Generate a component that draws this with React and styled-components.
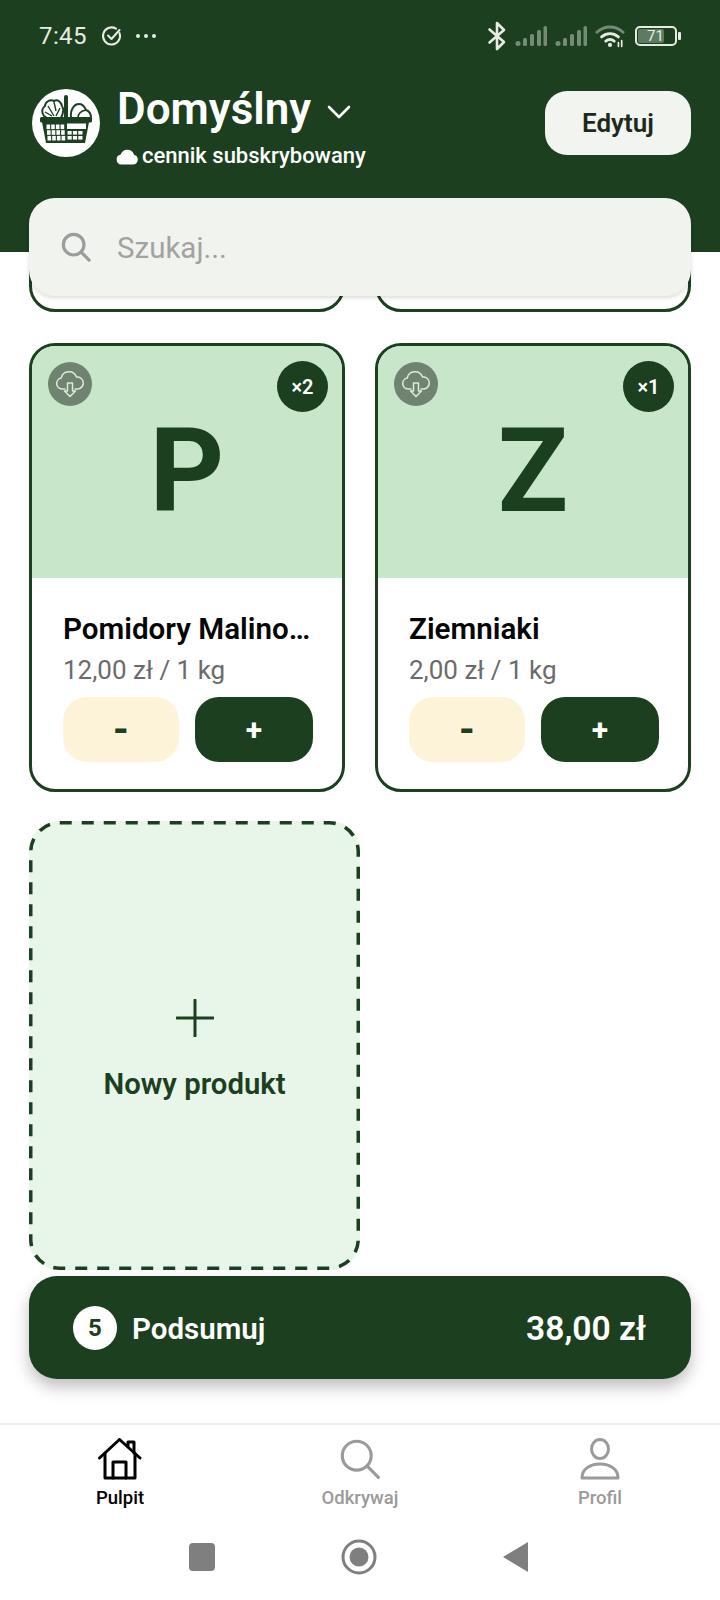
import React from 'react';
import styled, { createGlobalStyle } from 'styled-components';

const DARK = '#1c3f20';

const Global = createGlobalStyle`
    html, body {
        margin: 0;
        padding: 0;
        background: #fff;
        font-family: Roboto, "Noto Sans", sans-serif;
    }
`;

const Page = styled.div`
    position: relative;
    width: 720px;
    height: 1600px;
    display: flex;
    flex-direction: column;
    background: #fff;
    overflow: hidden;
`;

const Top = styled.header`
    height: 252px;
    flex: none;
    background: ${DARK};
    color: #fff;
    box-sizing: border-box;
    padding: 18px 29px 0 32px;
`;

const StatusBar = styled.div`
    height: 36px;
    display: flex;
    align-items: center;
    justify-content: space-between;
    padding: 0 14px 0 7px;
    color: #e6ebe4;
`;

const StatusGroup = styled.div`
    display: flex;
    align-items: center;
    gap: ${p => p.$gap || 10}px;
`;

const Time = styled.span`
    font-size: 24px;
    letter-spacing: 0.4px;
`;

const Profile = styled.div`
    margin-top: 35px;
    display: flex;
    align-items: flex-start;
    justify-content: space-between;
`;

const ProfileLeft = styled.div`
    display: flex;
    gap: 17px;
`;

const ProfileText = styled.div`
    display: flex;
    flex-direction: column;
    margin-top: -3px;
`;

const TitleRow = styled.div`
    display: flex;
    align-items: center;
    gap: 16px;
    height: 46px;
`;

const Title = styled.h1`
    margin: 0;
    font-size: 44px;
    line-height: 46px;
    font-weight: 600;
    color: #fff;
`;

const Sub = styled.div`
    margin-top: 11px;
    margin-left: -1px;
    display: flex;
    align-items: center;
    gap: 3px;
    font-size: 22px;
    line-height: 26px;
    font-weight: 500;
    color: #fff;
`;

const EditButton = styled.button`
    width: 146px;
    height: 64px;
    margin-top: 2px;
    border: 0;
    border-radius: 22px;
    background: #f2f4ef;
    color: #1b2a1d;
    font: 600 26px Roboto, sans-serif;
`;

const Search = styled.div`
    position: absolute;
    z-index: 3;
    left: 29px;
    top: 198px;
    width: 662px;
    height: 98px;
    box-sizing: border-box;
    padding-left: 32px;
    display: flex;
    align-items: center;
    gap: 26px;
    background: #f1f3ee;
    border-radius: 26px;
    box-shadow: 0 2px 4px rgba(0, 0, 0, 0.14);
`;

const SearchText = styled.span`
    font-size: 29.5px;
    margin-top: 2px;
    color: #a2a3a1;
`;

const Scroll = styled.main`
    position: relative;
    flex: 1;
    overflow: hidden;
`;

const Grid = styled.div`
    margin: -20px 0 0 29px;
    display: grid;
    grid-template-columns: 316px 316px;
    column-gap: 30px;
    row-gap: 31px;
    align-items: start;
`;

const PartialCard = styled.div`
    height: 80px;
    box-sizing: border-box;
    background: #fff;
    border: 3px solid ${DARK};
    border-radius: 26px;
`;

const Card = styled.article`
    height: 449px;
    box-sizing: border-box;
    background: #fff;
    border: 3px solid ${DARK};
    border-radius: 26px;
    overflow: hidden;
`;

const Thumb = styled.div`
    position: relative;
    height: 232px;
    box-sizing: border-box;
    padding-top: 17px;
    background: #c8e6c9;
    display: flex;
    align-items: center;
    justify-content: center;
    font-size: 116px;
    font-weight: 700;
    line-height: 1;
    color: ${DARK};
`;

const CloudBadge = styled.div`
    position: absolute;
    left: 16px;
    top: 16px;
    width: 44px;
    height: 44px;
    border-radius: 50%;
    background: #6e8471;
    display: flex;
    align-items: center;
    justify-content: center;
`;

const QtyBadge = styled.div`
    position: absolute;
    right: 14px;
    top: 15px;
    width: 51px;
    height: 51px;
    border-radius: 50%;
    background: ${DARK};
    color: #fff;
    font-size: 20px;
    font-weight: 600;
    display: flex;
    align-items: center;
    justify-content: center;
`;

const CardBody = styled.div`
    padding: 33px 28px 0 31px;
`;

const Name = styled.div`
    font-size: 29.6px;
    line-height: 36px;
    font-weight: 600;
    color: #050505;
    white-space: nowrap;
`;

const Price = styled.div`
    margin-top: 7px;
    font-size: 26px;
    line-height: 32px;
    color: #6b6b6b;
`;

const Steppers = styled.div`
    margin-top: 11px;
    display: grid;
    grid-template-columns: 116px 118px;
    gap: 16px;
`;

const Stepper = styled.button`
    height: 65px;
    border: 0;
    padding: 0;
    border-radius: 24px;
    background: ${p => (p.$primary ? DARK : '#fdf3d8')};
    color: ${p => (p.$primary ? '#fff' : DARK)};
    font: 700 ${p => (p.$primary ? 30 : 40)}px Roboto, sans-serif;
`;

const NewCard = styled.div`
    position: relative;
    width: 331px;
    height: 449px;
    margin-top: -2px;
    padding-top: 8px;
    box-sizing: border-box;
    background: #e8f5e9;
    border-radius: 30px;
    display: flex;
    flex-direction: column;
    align-items: center;
    justify-content: center;
    gap: 30px;
    font-size: 29.3px;
    font-weight: 600;
    color: ${DARK};
`;

const DashOutline = styled.svg`
    position: absolute;
    inset: 0;
`;

const Summary = styled.div`
    position: absolute;
    left: 29px;
    right: 29px;
    bottom: 44px;
    height: 103px;
    box-sizing: border-box;
    padding: 0 45px 0 44px;
    border-radius: 28px;
    background: ${DARK};
    color: #fff;
    display: flex;
    align-items: center;
    justify-content: space-between;
    box-shadow: 0 8px 16px rgba(0, 0, 0, 0.26);
`;

const SummaryLeft = styled.div`
    display: flex;
    align-items: center;
    gap: 15px;
`;

const SummaryLabel = styled.span`
    margin-top: 2px;
    font-size: 29.5px;
    font-weight: 600;
`;

const Count = styled.span`
    width: 44px;
    height: 44px;
    border-radius: 50%;
    background: #fff;
    color: ${DARK};
    font-size: 24px;
    font-weight: 700;
    display: flex;
    align-items: center;
    justify-content: center;
`;

const Total = styled.span`
    margin-top: 2px;
    font-size: 33.6px;
    font-weight: 600;
`;

const Nav = styled.nav`
    flex: none;
    height: 177px;
    box-sizing: border-box;
    border-top: 2px solid #eeeeee;
    display: flex;
    flex-direction: column;
`;

const Tabs = styled.div`
    display: grid;
    grid-template-columns: repeat(3, 240px);
    padding-top: 13px;
`;

const Tab = styled.div`
    display: flex;
    flex-direction: column;
    align-items: center;
    gap: 6px;
    font-size: 18.5px;
    line-height: 24px;
    font-weight: 500;
    color: ${p => (p.$active ? '#000' : '#9a9a9a')};
`;

const SystemBar = styled.div`
    margin-top: 29px;
    display: flex;
    justify-content: center;
    align-items: center;
    gap: 126px;
    padding-right: 3px;
`;

const Logo = () => (
    <svg width="68" height="68" viewBox="0 0 68 68" style={{ flex: 'none' }}>
        <circle cx="34" cy="34" r="34" fill="#fff" />
        <path d="M12 27c-3-4-2-8 1-10 0-4 5-7 9-5 4-2 7 1 8 5 2 3 1 8-1 12H15z" fill="#fff" stroke={DARK} strokeWidth="2" strokeLinejoin="round" />
        <path d="M16 17l6 10M22 13l2 9M28 19l-4 8M13 23l7 4" stroke={DARK} strokeWidth="1.4" fill="none" />
        <rect x="32" y="6" width="4" height="26" rx="2" fill={DARK} />
        <path d="M39 29c-1-8 3-14 8-14s6 4 7 6c3 1 5 4 5 8z" fill="#fff" stroke={DARK} strokeWidth="2" strokeLinejoin="round" />
        <path d="M46 29c0-4 2-7 8-8" stroke={DARK} strokeWidth="1.6" fill="none" />
        <rect x="8" y="28" width="52" height="5.5" rx="1.5" fill={DARK} />
        <path d="M10 33h47l-4 21H14z" fill={DARK} />
        <g fill="#fff">
            {[0, 1, 2].map(r => [0, 1, 2, 3].map(c => (
                <rect key={`${r}${c}`} x={14.5 + c * 4.7 + r * 0.5} y={35.5 + r * 5.7} width="3.6" height="4.6" />
            )))}
            <rect x="35" y="34.5" width="19" height="5.5" />
            {[0, 1].map(r => [0, 1, 2].map(c => (
                <rect key={`k${r}${c}`} x={35.5 + c * 5.4} y={42 + r * 5} width="4.2" height="3.6" />
            )))}
        </g>
    </svg>
);

const Check = () => (
    <svg width="22" height="22" viewBox="0 0 22 22" fill="none" stroke="#e6ebe4" strokeWidth="2" strokeLinecap="round" strokeLinejoin="round">
        <path d="M18.5 8a8.5 8.5 0 1 1-3.5-4.3" />
        <path d="M7 10.5l3.5 3.5 8-9" />
    </svg>
);

const Dots = () => (
    <svg width="22" height="6" viewBox="0 0 22 6" fill="#e6ebe4" style={{ marginLeft: -2 }}>
        <circle cx="3" cy="3" r="2" />
        <circle cx="11" cy="3" r="2" />
        <circle cx="19" cy="3" r="2" />
    </svg>
);

const Bluetooth = () => (
    <svg width="20" height="30" viewBox="0 0 20 30" fill="none" stroke="#e6ebe4" strokeWidth="2.6" strokeLinejoin="round" strokeLinecap="round">
        <path d="M2.5 8.500L17 21 10 28V2l7 7L2.5 21.500" />
    </svg>
);

const Signal = () => (
    <svg width="32" height="22" viewBox="0 0 32 22" fill="#748c76">
        <circle cx="3" cy="18.5" r="2.5" />
        <rect x="8" y="13" width="4" height="8" rx="1.5" />
        <rect x="15" y="9" width="4" height="12" rx="1.5" />
        <rect x="22" y="5" width="4" height="16" rx="1.5" />
        <rect x="28.5" y="1" width="3.5" height="20" rx="1.5" />
    </svg>
);

const Wifi = () => (
    <svg width="30" height="24" viewBox="0 0 32 24" fill="none" strokeLinecap="round">
        <path d="M2 8c8-7.5 20-7.500 28 0" stroke="#748c76" strokeWidth="3" />
        <path d="M7 13c5.500-4.500 12.500-4.500 18 0" stroke="#e6ebe4" strokeWidth="3" />
        <path d="M11.500 17.500c3-2.300 6-2.300 9 0" stroke="#e6ebe4" strokeWidth="3" />
        <circle cx="16" cy="21.500" r="2.200" fill="#e6ebe4" />
        <path d="M25 19v4M28.500 17v6" stroke="#e6ebe4" strokeWidth="1.800" />
    </svg>
);

const BatteryBox = styled.div`
    position: relative;
    width: 42px;
    height: 20px;
    margin-left: 2px;
    box-sizing: border-box;
    border: 2px solid #e6ebe4;
    border-radius: 5px;
    padding: 1px;
    &::after {
        content: '';
        position: absolute;
        right: -6px;
        top: 4px;
        width: 3px;
        height: 8px;
        border-radius: 1px;
        background: #e6ebe4;
    }
`;

const BatteryFill = styled.div`
    height: 100%;
    width: 72%;
    background: #5f7a62;
    border-radius: 2px;
    font-size: 15px;
    line-height: 14px;
    text-align: right;
    color: #e6ebe4;
`;

const Chevron = () => (
    <svg width="24" height="14" viewBox="0 0 24 14" fill="none" stroke="#fff" strokeWidth="2.6" strokeLinecap="round" strokeLinejoin="round" style={{ marginTop: 6 }}>
        <path d="M2 2l10 10L22 2" />
    </svg>
);

const SmallCloud = () => (
    <svg width="23" height="17" viewBox="0 0 23 17" fill="#fff">
        <path d="M5.500 16.500a5 5 0 0 1-.8-9.900A7 7 0 0 1 18 6.700a5 5 0 0 1-.5 9.800z" />
    </svg>
);

const SearchIcon = ({ size = 30, color = '#9c9c9c', width = 3.4 }) => (
    <svg width={size} height={size} viewBox="0 0 32 32" fill="none" stroke={color} strokeWidth={width} strokeLinecap="round">
        <circle cx="13.500" cy="13.500" r="11" />
        <path d="M21.500 21.500L30 30" />
    </svg>
);

const CloudDown = () => (
    <svg width="30" height="28" viewBox="0 0 30 28" fill="none" stroke="#dfe7de" strokeWidth="1.500" strokeLinejoin="round" strokeLinecap="round">
        <path d="M10 19H7a5.500 5.500 0 0 1-.8-10.900A8 8 0 0 1 21.500 7 6 6 0 0 1 23 19h-3" />
        <path d="M12.500 13h5v8h3L15 26.500 9.500 21h3z" />
    </svg>
);

const PlusIcon = () => (
    <svg width="38" height="38" viewBox="0 0 38 38" stroke={DARK} strokeWidth="3" strokeLinecap="round">
        <path d="M19 1v36M1 19h36" />
    </svg>
);

const HomeIcon = () => (
    <svg width="44" height="42" viewBox="0 0 44 42" fill="none" stroke="#000" strokeWidth="3" strokeLinejoin="round" strokeLinecap="round">
        <path d="M1.500 20L21.500 1.500 42 20" />
        <path d="M7 15.500V40h30V15.500" />
        <path d="M15 40V24h13v16" />
        <path d="M30 8V4h6v11" />
    </svg>
);

const UserIcon = () => (
    <svg width="40" height="42" viewBox="0 0 40 42" fill="none" stroke="#9a9a9a" strokeWidth="3" strokeLinejoin="round">
        <ellipse cx="20" cy="11" rx="8.500" ry="9.500" />
        <path d="M2 40c0-9 8-14 18-14s18 5 18 14z" />
    </svg>
);

const SystemSquare = () => (
    <svg width="26" height="28" viewBox="0 0 26 28"><rect width="26" height="28" rx="4" fill="#7f7f7f" /></svg>
);

const SystemCircle = () => (
    <svg width="36" height="36" viewBox="0 0 36 36">
        <circle cx="18" cy="18" r="16" fill="none" stroke="#7f7f7f" strokeWidth="3" />
        <circle cx="18" cy="18" r="9.500" fill="#7f7f7f" />
    </svg>
);

const SystemBack = () => (
    <svg width="25" height="30" viewBox="0 0 25 30"><path d="M25 0v30L0 15z" fill="#7f7f7f" /></svg>
);

const products = [
    { letter: 'P', qty: 2, name: 'Pomidory Malino…', price: '12,00 zł / 1 kg' },
    { letter: 'Z', qty: 1, name: 'Ziemniaki', price: '2,00 zł / 1 kg' },
];

const ProductCard = ({ letter, qty, name, price }) => (
    <Card>
        <Thumb>
            <CloudBadge><CloudDown /></CloudBadge>
            <QtyBadge>×{qty}</QtyBadge>
            {letter}
        </Thumb>
        <CardBody>
            <Name>{name}</Name>
            <Price>{price}</Price>
            <Steppers>
                <Stepper>-</Stepper>
                <Stepper $primary>+</Stepper>
            </Steppers>
        </CardBody>
    </Card>
);

const App = () => (
    <Page>
        <Global />
        <Top>
            <StatusBar>
                <StatusGroup $gap={14}>
                    <Time>7:45</Time>
                    <Check />
                    <Dots />
                </StatusGroup>
                <StatusGroup $gap={8}>
                    <Bluetooth />
                    <Signal />
                    <Signal />
                    <Wifi />
                    <BatteryBox><BatteryFill>71</BatteryFill></BatteryBox>
                </StatusGroup>
            </StatusBar>
            <Profile>
                <ProfileLeft>
                    <Logo />
                    <ProfileText>
                        <TitleRow>
                            <Title>Domyślny</Title>
                            <Chevron />
                        </TitleRow>
                        <Sub><SmallCloud />cennik subskrybowany</Sub>
                    </ProfileText>
                </ProfileLeft>
                <EditButton>Edytuj</EditButton>
            </Profile>
        </Top>
        <Search>
            <SearchIcon />
            <SearchText>Szukaj...</SearchText>
        </Search>
        <Scroll>
            <Grid>
                <PartialCard />
                <PartialCard />
                {products.map(p => <ProductCard key={p.letter} {...p} />)}
                <NewCard>
                    <DashOutline width="331" height="449" fill="none" stroke={DARK} strokeWidth="3.5">
                        <rect x="1.75" y="1.75" width="327.5" height="445.5" rx="29" strokeDasharray="12 10" />
                    </DashOutline>
                    <PlusIcon />
                    Nowy produkt
                </NewCard>
            </Grid>
            <Summary>
                <SummaryLeft><Count>5</Count><SummaryLabel>Podsumuj</SummaryLabel></SummaryLeft>
                <Total>38,00 zł</Total>
            </Summary>
        </Scroll>
        <Nav>
            <Tabs>
                <Tab $active><HomeIcon />Pulpit</Tab>
                <Tab><SearchIcon size={42} color="#9a9a9a" width={2.4} />Odkrywaj</Tab>
                <Tab><UserIcon />Profil</Tab>
            </Tabs>
            <SystemBar>
                <SystemSquare />
                <SystemCircle />
                <SystemBack />
            </SystemBar>
        </Nav>
    </Page>
);

export default App;
